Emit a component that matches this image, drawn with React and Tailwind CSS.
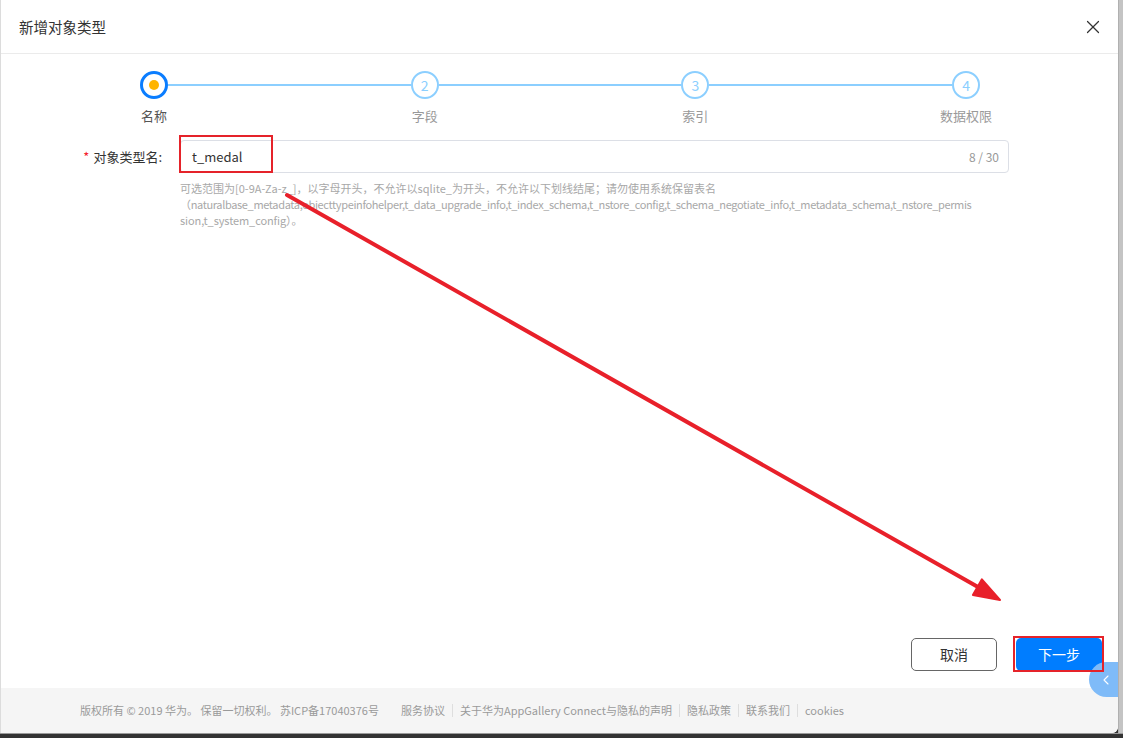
import React from "react";
import { ChevronLeft, X } from "lucide-react";

function Step({ n, label, active }) {
  return (
    <div className="flex flex-col items-center w-[28px]">
      {active ? (
        <div className="w-[28px] h-[28px] rounded-full border-[3px] border-[#0a7dff] flex items-center justify-center bg-white">
          <div className="w-[10px] h-[10px] rounded-full bg-[#ffb400]" />
        </div>
      ) : (
        <div className="w-[28px] h-[28px] rounded-full border-[2px] border-[#8ccfff] flex items-center justify-center bg-white text-[#8ccfff] text-[14px] leading-none">
          {n}
        </div>
      )}
      <div
        className={
          "mt-[8px] whitespace-nowrap text-[13px] leading-[18px] " +
          (active ? "text-[#555]" : "text-[#999]")
        }
      >
        {label}
      </div>
    </div>
  );
}

function Line() {
  return <div className="flex-1 h-[2px] mt-[13px] bg-[#8ccfff]" />;
}

function Sep() {
  return <div className="w-px h-[13px] bg-[#dedede] mx-[7px]" />;
}

export default function App() {
  return (
    <div className="relative w-[1123px] h-[738px] overflow-hidden bg-[#333] font-['Noto_Sans_CJK_SC','Noto_Sans',sans-serif]">
      <div className="flex h-[733px]">
        <div className="flex flex-col w-[1118px] h-full bg-white border-l border-[#dcdcdc] rounded-br-[6px] overflow-hidden">
          {/* header */}
          <div className="h-[54px] shrink-0 flex items-center justify-between pl-[18px] pr-[14px] border-b border-[#ebebeb]">
            <div className="text-[14.5px] text-[#333]">新增对象类型</div>
            <X size={22} strokeWidth={1.3} className="text-[#333]" />
          </div>

          {/* body */}
          <div className="flex-1 flex flex-col">
            <div className="flex items-start pt-[17px] pl-[139px] pr-[138px]">
              <Step n={1} label="名称" active />
              <Line />
              <Step n={2} label="字段" />
              <Line />
              <Step n={3} label="索引" />
              <Line />
              <Step n={4} label="数据权限" />
            </div>

            <div className="flex items-center mt-[15px]">
              <div className="w-[179px] pr-[18px] text-right text-[13px] text-[#333]">
                <span className="text-[#f5222d] mr-[4px]">*</span>对象类型名:
              </div>
              <div className="w-[829px] h-[33px] rounded-[4px] border border-[#dcdfe6] flex items-center justify-between pl-[11px] pr-[9px]">
                <span className="text-[13px] text-[#333]">t_medal</span>
                <span className="text-[12px] text-[#999]">8 / 30</span>
              </div>
            </div>

            <div className="pl-[179px] mt-[7px] text-[11px] leading-[16px] text-[#a8a8a8] whitespace-nowrap">
              <div>可选范围为[0-9A-Za-z_]，以字母开头，不允许以sqlite_为开头，不允许以下划线结尾；请勿使用系统保留表名</div>
              <div className="tracking-[-0.36px]">
                （naturalbase_metadata,objecttypeinfohelper,t_data_upgrade_info,t_index_schema,t_nstore_config,t_schema_negotiate_info,t_metadata_schema,t_nstore_permis
              </div>
              <div className="tracking-[-0.1px]">sion,t_system_config）。</div>
            </div>

            <div className="flex-1" />

            <div className="flex justify-end gap-[19px] pr-[16px] pb-[17px]">
              <button className="w-[86px] h-[33px] rounded-[5px] border border-[#666] bg-white text-[14px] text-[#333]">
                取消
              </button>
              <button className="w-[86px] h-[33px] rounded-[5px] bg-[#007dff] text-[14px] text-white">
                下一步
              </button>
            </div>
          </div>

          {/* footer */}
          <div className="h-[45px] shrink-0 bg-[#f5f5f5] flex items-center pl-[79px] text-[11px] text-[#9a9a9a] whitespace-nowrap">
            <span>版权所有 © 2019 华为。 保留一切权利。 苏ICP备17040376号</span>
            <span className="ml-[22px]">服务协议</span>
            <Sep />
            <span>关于华为AppGallery Connect与隐私的声明</span>
            <Sep />
            <span>隐私政策</span>
            <Sep />
            <span>联系我们</span>
            <Sep />
            <span>cookies</span>
          </div>
        </div>
        <div className="w-[5px] h-full bg-[#c4c4c4] border-l border-[#b0b0b0]" />
      </div>
      <div className="h-[5px] bg-[#333] border-t border-[#9a9a9a]" />

      {/* floating side button */}
      <div className="absolute left-[1089px] top-[662px] w-[29px] h-[35px] rounded-l-full bg-[#7fbbf8] flex items-center justify-center pl-[4px]">
        <ChevronLeft size={16} strokeWidth={1.6} className="text-white" />
      </div>

      {/* annotations */}
      <div className="absolute left-[179px] top-[135px] w-[94px] h-[38px] border-2 border-[#e5232a]" />
      <div className="absolute left-[1013px] top-[636px] w-[91px] h-[36px] border-2 border-[#e5232a]" />
      <svg
        className="absolute left-0 top-0 pointer-events-none"
        width="1123"
        height="738"
        viewBox="0 0 1123 738"
      >
        <line x1="287" y1="195" x2="978" y2="587" stroke="#e8202a" strokeWidth="4" strokeLinecap="round" />
        <polygon points="1000,600 972.9,595 981.9,579.3" fill="#e8202a" stroke="#e8202a" strokeWidth="2" strokeLinejoin="round" />
      </svg>
    </div>
  );
}
